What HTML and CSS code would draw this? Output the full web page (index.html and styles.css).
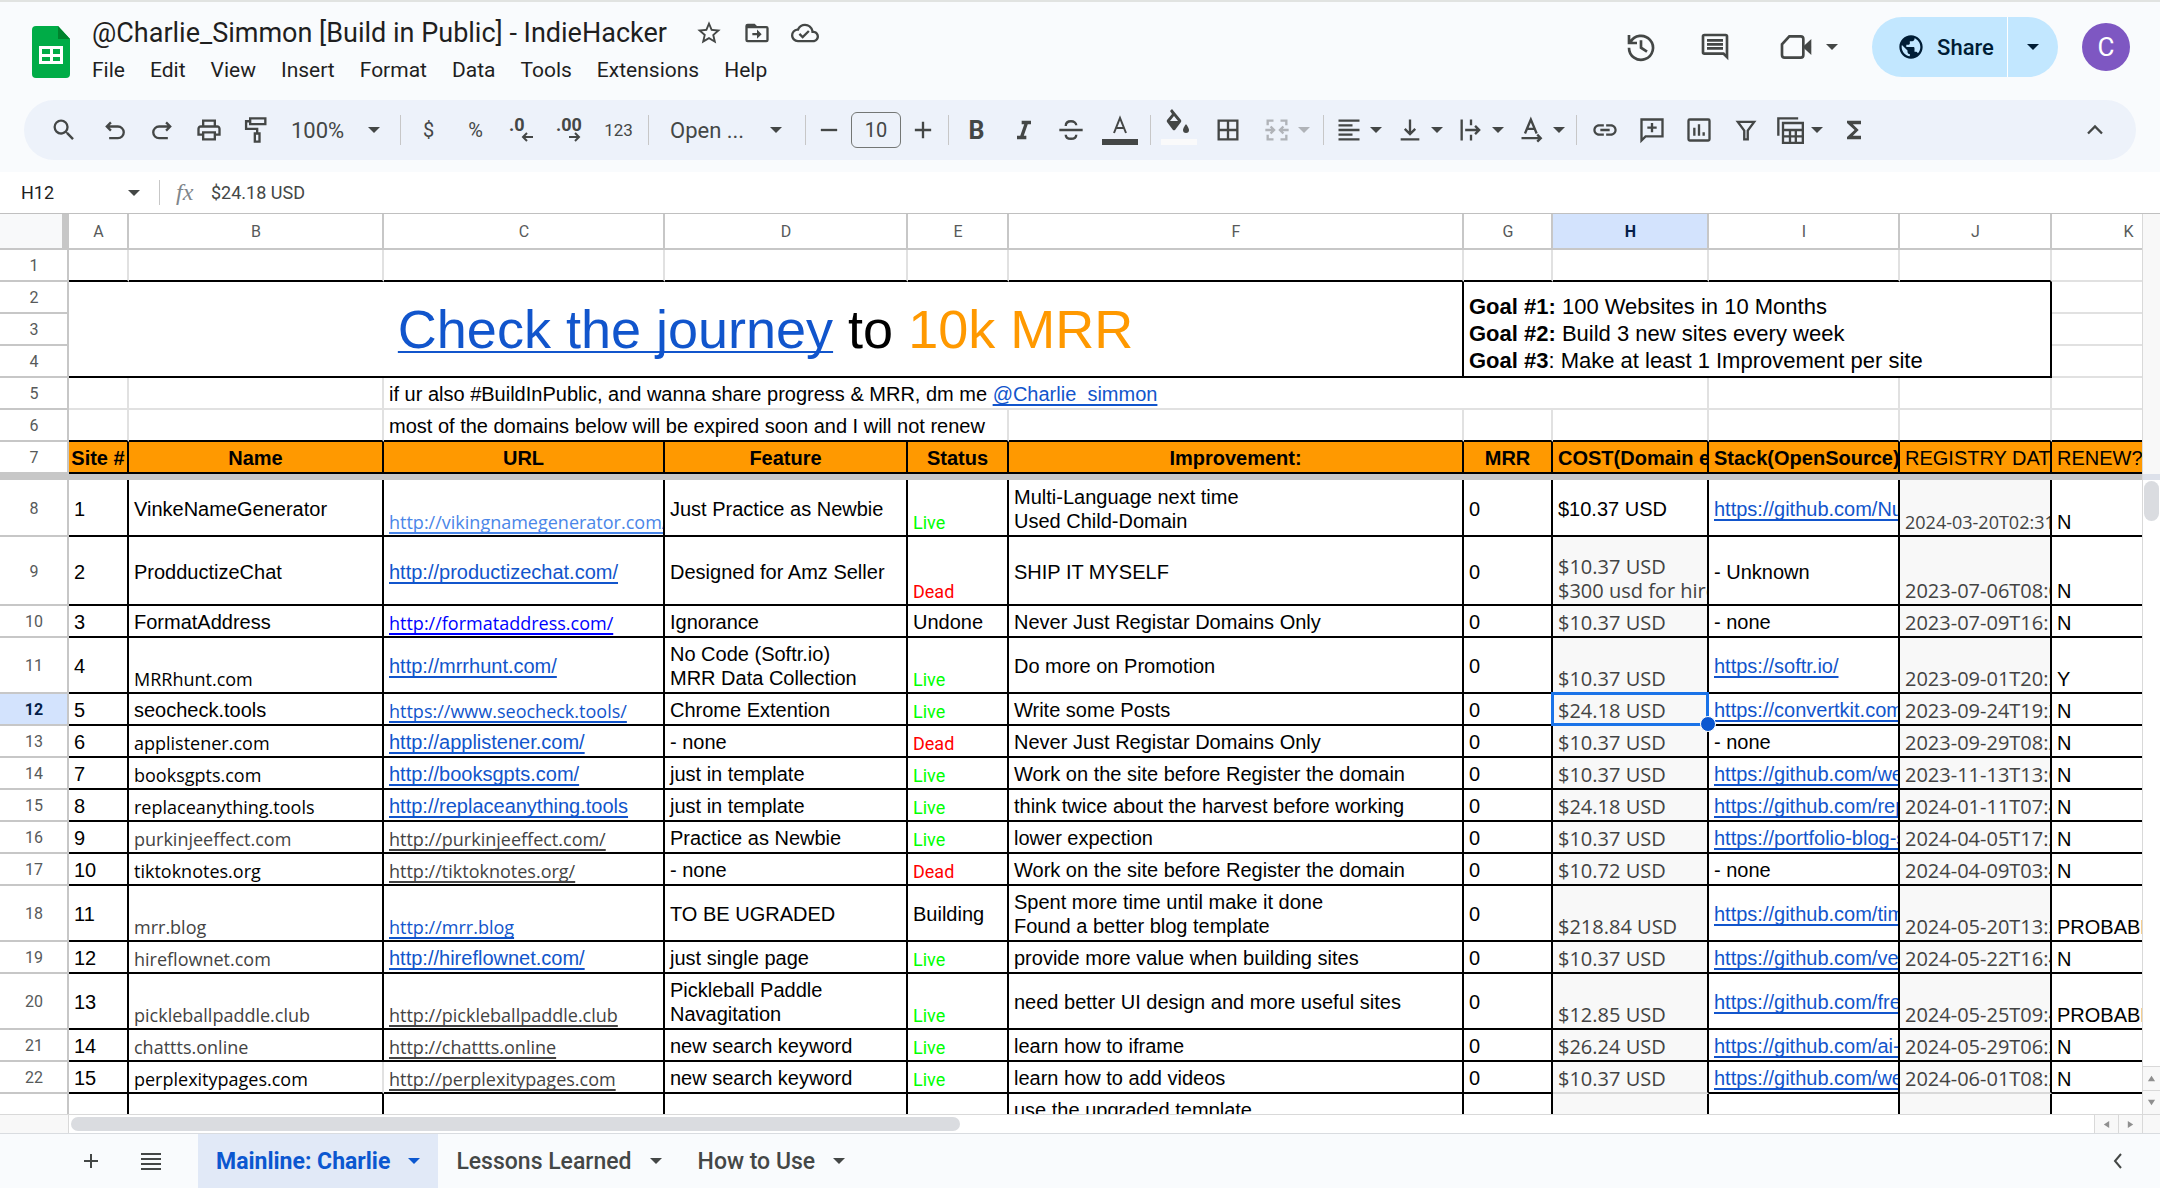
FILE: index.html
```html
<!DOCTYPE html>
<html lang="en">
<head>
  <meta charset="UTF-8">
  <meta name="viewport" content="width=device-width, initial-scale=1.0">
  <title>@Charlie_Simmon [Build in Public] - IndieHacker</title>
  <link rel="stylesheet" href="styles.css">
</head>
<body>

  <header class="top">
    <svg class="logo" viewBox="0 0 38 52"><path d="M4 0h22l12 13v35a4 4 0 0 1-4 4H4a4 4 0 0 1-4-4V4a4 4 0 0 1 4-4z" fill="#00ac47"/><path d="M26 0l12 13H26z" fill="#00832d"/><path d="M7 20h24v18H7zM10 23v5h8v-5zM21 23v5h7v-5zM10 31v4h8v-4zM21 31v4h7v-4z" fill="#fff" fill-rule="evenodd"/></svg>
    <div class="doc">
      <div class="doc-title">
        <h1>@Charlie_Simmon [Build in Public] - IndieHacker</h1>
        <button aria-label="Star"><svg viewBox="0 0 24 24"><path d="M22 9.24l-7.19-.62L12 2 9.19 8.63 2 9.24l5.46 4.73L5.82 21 12 17.27 18.18 21l-1.63-7.03L22 9.24zM12 15.4l-3.76 2.27 1-4.28-3.32-2.88 4.38-.38L12 6.1l1.71 4.04 4.38.38-3.32 2.88 1 4.28L12 15.4z"/></svg></button>
        <button aria-label="Move"><svg viewBox="0 0 24 24"><path d="M20 6h-8l-2-2H4a2 2 0 0 0-2 2v12a2 2 0 0 0 2 2h16a2 2 0 0 0 2-2V8a2 2 0 0 0-2-2zm0 12H4V8h16v10zm-8-1l4-4-4-4v3H8v2h4z"/></svg></button>
        <button aria-label="Saved to Drive"><svg viewBox="0 0 24 24"><path d="M19.35 10.04A7.49 7.49 0 0 0 12 4C9.11 4 6.6 5.64 5.35 8.04A5.994 5.994 0 0 0 0 14c0 3.31 2.69 6 6 6h13c2.76 0 5-2.24 5-5 0-2.64-2.05-4.78-4.65-4.96zM19 18H6c-2.21 0-4-1.79-4-4s1.79-4 4-4h.71C7.37 7.69 9.48 6 12 6c3.04 0 5.5 2.46 5.5 5.5v.5H19c1.66 0 3 1.34 3 3s-1.34 3-3 3zm-9-3.82l-2.09-2.09L6.5 13.5 10 17l6.01-6.01-1.41-1.41z"/></svg></button>
      </div>
      <nav class="menu">
        <button>File</button>
        <button>Edit</button>
        <button>View</button>
        <button>Insert</button>
        <button>Format</button>
        <button>Data</button>
        <button>Tools</button>
        <button>Extensions</button>
        <button>Help</button>
      </nav>
    </div>
    <div class="actions">
      <button class="big" aria-label="History"><svg viewBox="0 0 24 24"><path d="M3 3v6h6M4 8.500A9 9 0 1 1 3 12.500M12 7v5.500l4.500 3" class="line"/></svg></button>
      <button class="big" aria-label="Comments"><svg viewBox="0 0 24 24"><path d="M21.990 4a2 2 0 0 0-2-2H4a2 2 0 0 0-2 2v12a2 2 0 0 0 2 2h14l4 4zM20 4v13.170L18.830 16H4V4zM6 12h12v2H6zM6 9h12v2H6zM6 6h12v2H6z" fill-rule="evenodd"/></svg></button>
      <button class="big meet" aria-label="Meet"><svg viewBox="0 0 24 24"><path d="M7 4h8.500a2 2 0 0 1 2 2v12a2 2 0 0 1-2 2H3.500a2 2 0 0 1-2-2V10z" class="line"/><path d="M18 11l5.500-5v12L18 13z"/></svg><i class="caret"></i></button>
      <div class="share">
        <button class="share-main"><svg viewBox="0 0 24 24"><path d="M12 2C6.480 2 2 6.480 2 12s4.480 10 10 10 10-4.480 10-10S17.520 2 12 2zm-1 17.930c-3.950-.49-7-3.850-7-7.930 0-.62.080-1.210.21-1.790L9 15v1c0 1.100.9 2 2 2v1.930zm6.900-2.540c-.26-.81-1-1.390-1.900-1.390h-1v-3c0-.55-.45-1-1-1H8v-2h2c.55 0 1-.45 1-1V7h2c1.100 0 2-.9 2-2v-.41c2.930 1.190 5 4.060 5 7.410 0 2.080-.8 3.970-2.100 5.390z"/></svg>Share</button>
        <button class="share-more" aria-label="Share options"><i class="caret"></i></button>
      </div>
      <button class="avatar">C</button>
    </div>
  </header>

  <div class="toolbar">
    <button class="search" aria-label="Search menus"><svg viewBox="0 0 24 24"><path d="M15.500 14h-.79l-.28-.27A6.471 6.471 0 0 0 16 9.500 6.500 6.500 0 1 0 9.500 16c1.610 0 3.090-.59 4.230-1.570l.27.28v.79l5 4.990L20.490 19l-4.990-5zm-6 0C7.010 14 5 11.990 5 9.500S7.010 5 9.500 5 14 7.010 14 9.500 11.990 14 9.500 14z"/></svg></button>
    <button aria-label="Undo"><svg viewBox="0 0 24 24"><path d="M8.500 5.500L5 9l3.500 3.500M5 9h9.500a4.500 4.500 0 0 1 0 10H7" class="line"/></svg></button>
    <button aria-label="Redo"><svg viewBox="0 0 24 24"><path d="M15.500 5.500L19 9l-3.500 3.500M19 9H9.500a4.500 4.500 0 0 0 0 10H17" class="line"/></svg></button>
    <button aria-label="Print"><svg viewBox="0 0 24 24"><path d="M19 8h-1V3H6v5H5c-1.660 0-3 1.340-3 3v6h4v4h12v-4h4v-6c0-1.660-1.340-3-3-3zM8 5h8v3H8V5zm8 14H8v-4h8v4zm2-4v-2H6v2H4v-4c0-.55.45-1 1-1h14c.55 0 1 .45 1 1v4h-2z"/></svg></button>
    <button aria-label="Paint format"><svg viewBox="0 0 24 24"><path d="M7 2h13v5H7zM7 4.500H3.500V11H13v4" class="line"/><path d="M11 15h4v7h-4z" class="line"/></svg></button>
    <label class="pick zoom"><select aria-label="Zoom"><option>100%</option></select><i class="caret"></i></label>
    <span class="sep"></span>
    <button class="sym">$</button>
    <button class="sym">%</button>
    <button aria-label="Decrease decimal places"><svg class="dec" viewBox="0 0 36 36"><text x="4" y="19">.0</text><path d="M28 25H18M22 21l-4 4 4 4" class="line"/></svg></button>
    <button aria-label="Increase decimal places"><svg class="dec" viewBox="0 0 36 36"><text x="4" y="19">.00</text><path d="M17 25h10M23 21l4 4-4 4" class="line"/></svg></button>
    <button class="num">123</button>
    <span class="sep"></span>
    <label class="pick font"><select aria-label="Font"><option>Open ...</option></select><i class="caret"></i></label>
    <span class="sep"></span>
    <div class="size">
      <button aria-label="Decrease font size"><svg viewBox="0 0 24 24"><path d="M5 12h14" class="line"/></svg></button>
      <input type="text" value="10" aria-label="Font size">
      <button aria-label="Increase font size"><svg viewBox="0 0 24 24"><path d="M5 12h14M12 5v14" class="line"/></svg></button>
    </div>
    <span class="sep"></span>
    <button class="bold">B</button>
    <button aria-label="Italic"><svg viewBox="0 0 24 24"><path d="M10 4v3h2.210l-3.420 10H6v3h8v-3h-2.210l3.420-10H18V4z"/></svg></button>
    <button aria-label="Strikethrough"><svg viewBox="0 0 24 24"><path d="M2 12h20M7.500 8.500c0-3 2-4 4.500-4s4.500 1.300 4.500 3.500M7.500 16c0 2.500 2 3.500 4.500 3.500s4.500-1 4.500-3.500" class="line"/></svg></button>
    <button class="wide" aria-label="Text color"><svg class="tall" viewBox="0 0 36 44"><path d="M12 25l6-15 6 15M14 20h8" class="line"/><path d="M0 31h36v6H0z"/></svg></button>
    <span class="sep"></span>
    <button aria-label="Fill color"><svg class="tall" viewBox="0 0 36 44"><path d="M9 3l2-2 9 11a2 2 0 0 1 0 2l-6 8a2 2 0 0 1-2 0l-6-8a2 2 0 0 1 0-2l5-6zM9 13h8l-4-5z" fill-rule="evenodd"/><path d="M25 16s3 4 3 6a3 3 0 0 1-6 0c0-2 3-6 3-6z"/><path d="M0 31h36v6H0z" fill="#fafafa"/></svg></button>
    <button class="wide" aria-label="Borders"><svg viewBox="0 0 24 24"><path d="M3 3v18h18V3H3zm8 16H5v-6h6v6zm0-8H5V5h6v6zm8 8h-6v-6h6v6zm0-8h-6V5h6v6z"/></svg></button>
    <button class="drop off" aria-label="Merge cells" disabled><svg viewBox="0 0 24 24"><path d="M9 4H4v4M4 16v4h5M15 4h5v4M20 16v4h-5M2 12h7M6.500 9l3 3-3 3M22 12h-7M17.500 9l-3 3 3 3" class="line"/></svg><i class="caret"></i></button>
    <span class="sep"></span>
    <button class="drop" aria-label="Horizontal align"><svg viewBox="0 0 24 24"><path d="M3 4h18M3 8h12M3 12h18M3 16h12M3 20h18" class="line"/></svg><i class="caret"></i></button>
    <button class="drop" aria-label="Vertical align"><svg viewBox="0 0 24 24"><path d="M4 20h16M12 3v12M7.500 11l4.500 4.500 4.500-4.500" class="line"/></svg><i class="caret"></i></button>
    <button class="drop" aria-label="Text wrapping"><svg viewBox="0 0 24 24"><path d="M4 3v18M12 3v5M12 16v5M7 12h12M15.500 8.500L19 12l-3.500 3.500" class="line"/></svg><i class="caret"></i></button>
    <button class="drop" aria-label="Text rotation"><svg viewBox="0 0 24 24"><path d="M6 15l5-12 5 12M8 11h6M3 19h16M16.500 16l3 3-3 3" class="line"/></svg><i class="caret"></i></button>
    <span class="sep"></span>
    <button aria-label="Insert link"><svg viewBox="0 0 24 24"><path d="M3.900 12c0-1.710 1.390-3.100 3.100-3.100h4V7H7c-2.760 0-5 2.240-5 5s2.240 5 5 5h4v-1.900H7c-1.710 0-3.100-1.390-3.100-3.100zM8 13h8v-2H8v2zm9-6h-4v1.900h4c1.710 0 3.100 1.390 3.100 3.100s-1.390 3.100-3.100 3.100h-4V17h4c2.760 0 5-2.240 5-5s-2.240-5-5-5z"/></svg></button>
    <button aria-label="Insert comment"><svg viewBox="0 0 24 24"><path d="M3 21V3h18v14.500H6.500zM12 6v8M8 10h8" class="line"/></svg></button>
    <button aria-label="Insert chart"><svg viewBox="0 0 24 24"><path d="M4 3h16a1 1 0 0 1 1 1v16a1 1 0 0 1-1 1H4a1 1 0 0 1-1-1V4a1 1 0 0 1 1-1zM8 10v7M12 7v10M16 14v3" class="line"/></svg></button>
    <button aria-label="Create a filter"><svg viewBox="0 0 24 24"><path d="M5 5h14l-5.500 7.500V20h-3v-7.500z" class="line"/></svg></button>
    <button class="drop" aria-label="Filter views"><svg viewBox="0 0 24 24"><path d="M2 17V2h17" class="line"/><path d="M6 6h17v17H6zM6 12h17M6 17.500h17M12 12v11M17 12v11" class="line"/></svg><i class="caret"></i></button>
    <button aria-label="Functions"><svg viewBox="0 0 24 24"><path d="M18 4H6v2l6.500 6L6 18v2h12v-3h-7l5-5-5-5h7z"/></svg></button>
    <button class="hide" aria-label="Hide the menus"><svg viewBox="0 0 24 24"><path d="M6 15l6-6 6 6" class="line"/></svg></button>
  </div>

  <div class="formula">
    <input class="namebox" type="text" value="H12" aria-label="Name box">
    <i class="caret"></i>
    <span class="rule"></span>
    <span class="fx">fx</span>
    <input class="fxinput" type="text" value="$24.18 USD" aria-label="Formula">
  </div>

  <main class="sheet">
    <div class="viewport">
      <table>
        <colgroup>
          <col class="c-n"><col class="c-a"><col class="c-b"><col class="c-c"><col class="c-d"><col class="c-e"><col class="c-f"><col class="c-g"><col class="c-h"><col class="c-i"><col class="c-j"><col class="c-k">
        </colgroup>
        <thead>
          <tr class="letters"><th class="corner"></th><th>A</th><th>B</th><th>C</th><th>D</th><th>E</th><th>F</th><th>G</th><th class="on">H</th><th>I</th><th>J</th><th>K</th></tr>
        </thead>
        <tbody>
          <tr class="plain edge"><th>1</th><td></td><td></td><td></td><td></td><td></td><td></td><td></td><td></td><td></td><td></td><td class="free"></td></tr>
          <tr><th>2</th><td class="banner" colspan="6" rowspan="3"><a href="#">Check the journey</a> to <span>10k MRR</span></td><td class="goals" colspan="4" rowspan="3"><b>Goal #1:</b> 100 Websites in 10 Months<br><b>Goal #2:</b> Build 3 new sites every week<br><b>Goal #3</b>: Make at least 1 Improvement per site</td><td class="free"></td></tr>
          <tr><th>3</th><td class="free"></td></tr>
          <tr><th>4</th><td class="free"></td></tr>
          <tr class="plain"><th>5</th><td></td><td></td><td colspan="6">if ur also #BuildInPublic, and wanna share progress &amp; MRR, dm me <a href="#">@Charlie_simmon</a></td><td></td><td></td><td></td></tr>
          <tr class="plain edge"><th>6</th><td></td><td></td><td colspan="3">most of the domains below will be expired soon and I will not renew</td><td></td><td></td><td></td><td></td><td></td><td></td></tr>
          <tr class="heading"><th>7</th><td>Site #</td><td>Name</td><td>URL</td><td>Feature</td><td>Status</td><td>Improvement:</td><td>MRR</td><td class="left">COST(Domain e</td><td class="left">Stack(OpenSource)</td><td class="left thin">REGISTRY DAT</td><td class="left thin">RENEW?</td></tr>
          <tr class="freeze"><td colspan="12"></td></tr>

          <tr class="r57"><th>8</th><td>1</td><td>VinkeNameGenerator</td><td class="os low"><a class="sky" href="#">http://vikingnamegenerator.com/</a></td><td>Just Practice as Newbie</td><td class="live">Live</td><td>Multi-Language next time<br>Used Child-Domain</td><td>0</td><td>$10.37 USD</td><td><a href="#">https://github.com/Nu</a></td><td class="date os">2024-03-20T02:31</td><td class="low">N</td></tr>
          <tr class="r69"><th>9</th><td>2</td><td>ProdductizeChat</td><td><a href="#">http://productizechat.com/</a></td><td>Designed for Amz Seller</td><td class="dead">Dead</td><td>SHIP IT MYSELF</td><td>0</td><td class="cost">$10.37 USD<br>$300 usd for hire</td><td>- Unknown</td><td class="date">2023-07-06T08:0</td><td class="low">N</td></tr>
          <tr><th>10</th><td>3</td><td>FormatAddress</td><td class="os low"><a class="pure" href="#">http://formataddress.com/</a></td><td>Ignorance</td><td>Undone</td><td>Never Just Registar Domains Only</td><td>0</td><td class="cost">$10.37 USD</td><td>- none</td><td class="date">2023-07-09T16:1</td><td class="low">N</td></tr>
          <tr class="r56"><th>11</th><td>4</td><td class="os low">MRRhunt.com</td><td><a href="#">http://mrrhunt.com/</a></td><td>No Code (Softr.io)<br>MRR Data Collection</td><td class="live">Live</td><td>Do more on Promotion</td><td>0</td><td class="cost">$10.37 USD</td><td><a href="#">https://softr.io/</a></td><td class="date">2023-09-01T20:5</td><td class="low">Y</td></tr>
          <tr><th class="on">12</th><td>5</td><td>seocheck.tools</td><td class="os low"><a href="#">https://www.seocheck.tools/</a></td><td>Chrome Extention</td><td class="live">Live</td><td>Write some Posts</td><td>0</td><td class="cost active">$24.18 USD</td><td><a href="#">https://convertkit.com</a></td><td class="date">2023-09-24T19:3</td><td class="low">N</td></tr>
          <tr><th>13</th><td>6</td><td class="os low">applistener.com</td><td><a href="#">http://applistener.com/</a></td><td>- none</td><td class="dead">Dead</td><td>Never Just Registar Domains Only</td><td>0</td><td class="cost">$10.37 USD</td><td>- none</td><td class="date">2023-09-29T08:2</td><td class="low">N</td></tr>
          <tr><th>14</th><td>7</td><td class="os low">booksgpts.com</td><td><a href="#">http://booksgpts.com/</a></td><td>just in template</td><td class="live">Live</td><td>Work on the site before Register the domain</td><td>0</td><td class="cost">$10.37 USD</td><td><a href="#">https://github.com/we</a></td><td class="date">2023-11-13T13:0</td><td class="low">N</td></tr>
          <tr><th>15</th><td>8</td><td class="os low">replaceanything.tools</td><td><a href="#">http://replaceanything.tools</a></td><td>just in template</td><td class="live">Live</td><td>think twice about the harvest before working</td><td>0</td><td class="cost">$24.18 USD</td><td><a href="#">https://github.com/rep</a></td><td class="date">2024-01-11T07:4</td><td class="low">N</td></tr>
          <tr><th>16</th><td>9</td><td class="os low gray">purkinjeeffect.com</td><td class="os low"><a class="gray" href="#">http://purkinjeeffect.com/</a></td><td>Practice as Newbie</td><td class="live">Live</td><td>lower expection</td><td>0</td><td class="cost">$10.37 USD</td><td><a href="#">https://portfolio-blog-s</a></td><td class="date">2024-04-05T17:2</td><td class="low">N</td></tr>
          <tr><th>17</th><td>10</td><td class="os low">tiktoknotes.org</td><td class="os low"><a class="gray" href="#">http://tiktoknotes.org/</a></td><td>- none</td><td class="dead">Dead</td><td>Work on the site before Register the domain</td><td>0</td><td class="cost">$10.72 USD</td><td>- none</td><td class="date">2024-04-09T03:4</td><td class="low">N</td></tr>
          <tr class="r56"><th>18</th><td>11</td><td class="os low gray">mrr.blog</td><td class="os low"><a href="#">http://mrr.blog</a></td><td>TO BE UGRADED</td><td>Building</td><td>Spent more time until make it done<br>Found a better blog template</td><td>0</td><td class="cost">$218.84 USD</td><td><a href="#">https://github.com/tim</a></td><td class="date">2024-05-20T13:3</td><td class="low">PROBABLY</td></tr>
          <tr><th>19</th><td>12</td><td class="os low gray">hireflownet.com</td><td><a href="#">http://hireflownet.com/</a></td><td>just single page</td><td class="live">Live</td><td>provide more value when building sites</td><td>0</td><td class="cost">$10.37 USD</td><td><a href="#">https://github.com/ver</a></td><td class="date">2024-05-22T16:4</td><td class="low">N</td></tr>
          <tr class="r56"><th>20</th><td>13</td><td class="os low gray">pickleballpaddle.club</td><td class="os low"><a class="gray" href="#">http://pickleballpaddle.club</a></td><td>Pickleball Paddle<br>Navagitation</td><td class="live">Live</td><td>need better UI design and more useful sites</td><td>0</td><td class="cost">$12.85 USD</td><td><a href="#">https://github.com/fre</a></td><td class="date">2024-05-25T09:4</td><td class="low">PROBABLY</td></tr>
          <tr><th>21</th><td>14</td><td class="os low gray">chattts.online</td><td class="os low"><a class="gray" href="#">http://chattts.online</a></td><td>new search keyword</td><td class="live">Live</td><td>learn how to iframe</td><td>0</td><td class="cost">$26.24 USD</td><td><a href="#">https://github.com/ai-a</a></td><td class="date">2024-05-29T06:3</td><td class="low">N</td></tr>
          <tr class="last"><th>22</th><td>15</td><td class="os low softright">perplexitypages.com</td><td class="os low"><a class="gray" href="#">http://perplexitypages.com</a></td><td>new search keyword</td><td class="live">Live</td><td>learn how to add videos</td><td>0</td><td class="cost">$10.37 USD</td><td><a href="#">https://github.com/we</a></td><td class="date">2024-06-01T08:2</td><td class="low">N</td></tr>
          <tr class="r56"><th></th><td></td><td></td><td></td><td></td><td></td><td>use the upgraded template<br>&nbsp;</td><td></td><td class="cost"></td><td></td><td class="date"></td><td></td></tr>
        </tbody>
      </table>
    </div>
    <div class="vbar">
      <div class="vbar-head"></div>
      <div class="vthumb"></div>
      <button class="arrow" aria-label="Scroll up"><svg viewBox="0 0 10 10"><path d="M1 8l4-6 4 6z"/></svg></button>
      <button class="arrow" aria-label="Scroll down"><svg viewBox="0 0 10 10"><path d="M1 2l4 6 4-6z"/></svg></button>
    </div>
  </main>

  <div class="hbar">
    <div class="hbar-left"></div>
    <div class="htrack"><div class="hthumb"></div></div>
    <button class="arrow" aria-label="Scroll left"><svg viewBox="0 0 10 10"><path d="M8 1L2 5l6 4z"/></svg></button>
    <button class="arrow" aria-label="Scroll right"><svg viewBox="0 0 10 10"><path d="M2 1l6 4-6 4z"/></svg></button>
    <div class="hbar-end"></div>
  </div>

  <footer class="tabs">
    <button class="tool" aria-label="Add sheet"><svg viewBox="0 0 24 24"><path d="M5 12h14M12 5v14" class="line"/></svg></button>
    <button class="tool" aria-label="All sheets"><svg viewBox="0 0 24 24"><path d="M2 4h20v2H2zM2 9h20v2H2zM2 14h20v2H2zM2 19h20v2H2z"/></svg></button>
    <button class="tab current">Mainline: Charlie<i class="caret"></i></button>
    <button class="tab">Lessons Learned<i class="caret"></i></button>
    <button class="tab">How to Use<i class="caret"></i></button>
    <button class="tool side" aria-label="Show side panel"><svg viewBox="0 0 24 24"><path d="M15 5l-6 7 6 7" class="line"/></svg></button>
  </footer>

</body>
</html>
```

FILE: styles.css
```css
* {
  box-sizing: border-box;
}

body {
  margin: 0;
  height: 100vh;
  display: flex;
  flex-direction: column;
  overflow: hidden;
  background: #f9fbfd;
  border-top: 2px solid #e1e3e1;
  font-family: Roboto, "Liberation Sans", sans-serif;
  color: #1f1f1f;
}

button, select, input {
  border: 0;
  padding: 0;
  margin: 0;
  background: none;
  font: inherit;
  color: inherit;
}

button {
  display: flex;
  align-items: center;
  justify-content: center;
  flex: none;
}

svg {
  width: 28px;
  height: 28px;
  flex: none;
  fill: currentColor;
}

.line {
  fill: none;
  stroke: currentColor;
  stroke-width: 2;
}

.caret {
  width: 0;
  height: 0;
  flex: none;
  border: 6px solid transparent;
  border-top-color: currentColor;
  border-bottom: 0;
}

/* header */
.top {
  display: flex;
  flex: none;
  height: 98px;
  padding: 0 30px 0 32px;
  color: #444746;
}

.logo {
  width: 38px;
  height: 52px;
  margin-top: 24px;
}

.doc {
  padding: 11px 0 0 22px;
}

.doc-title {
  display: flex;
  align-items: center;
  gap: 20px;
  height: 40px;
}

.doc-title h1 {
  margin: 0 8px 0 0;
  font-size: 27px;
  font-weight: 400;
  line-height: 40px;
  white-space: nowrap;
  color: #1f1f1f;
}

.menu {
  display: flex;
  gap: 25px;
  font-size: 21px;
  line-height: 34px;
  color: #1f1f1f;
}

.actions {
  display: flex;
  align-items: center;
  height: 90px;
  margin-left: auto;
}

.big {
  width: 74px;
}

.big svg {
  width: 32px;
  height: 32px;
}

.meet {
  width: 108px;
  gap: 14px;
  margin-right: 12px;
  padding-left: 5px;
}

.share {
  display: flex;
  height: 60px;
  margin-right: 24px;
  border-radius: 30px;
  overflow: hidden;
  background: #c2e7ff;
  color: #001d35;
  font-size: 22px;
  font-weight: 500;
}

.share-main {
  width: 136px;
  gap: 12px;
  padding-left: 12px;
  border-right: 1px solid #fff;
}

.share-more {
  width: 50px;
}

.avatar {
  width: 48px;
  height: 48px;
  border-radius: 50%;
  background: #7e57c2;
  color: #fff;
  font-size: 26px;
}

/* toolbar */
.toolbar {
  display: flex;
  flex: none;
  align-items: center;
  height: 60px;
  margin: 0 24px 12px;
  padding: 0 18px 0 13px;
  border-radius: 30px;
  background: #edf2fa;
  color: #444746;
  font-size: 22px;
}

.toolbar button {
  width: 47px;
  height: 44px;
}

.toolbar .search {
  width: 54px;
}

.toolbar .wide {
  width: 52px;
}

.toolbar .sym {
  font-size: 20px;
}

.toolbar .num {
  width: 51px;
  font-size: 17px;
}

.toolbar .bold {
  font-size: 25px;
  font-weight: 700;
}

.toolbar .drop {
  width: 61px;
  gap: 7px;
}

.toolbar .off {
  width: 65px;
  color: #b0b3b8;
}

.toolbar .hide {
  margin-left: auto;
}

.toolbar svg.dec {
  width: 36px;
  height: 36px;
  font-size: 18px;
  font-weight: 700;
}

.toolbar svg.tall {
  width: 36px;
  height: 44px;
}

.sep {
  width: 1px;
  height: 30px;
  margin: 0 4px;
  flex: none;
  background: #c7c7c7;
}

.pick {
  display: flex;
  flex: none;
  align-items: center;
  justify-content: space-between;
}

.pick select {
  appearance: none;
  flex: 1;
}

.zoom {
  width: 117px;
  padding: 0 16px 0 12px;
}

.font {
  width: 148px;
  padding: 0 19px 0 17px;
}

.size {
  display: flex;
  align-items: center;
  gap: 3px;
  padding-right: 2px;
}

.size button {
  width: 38px;
}

.size input {
  width: 50px;
  height: 36px;
  border: 1px solid #747775;
  border-radius: 6px;
  text-align: center;
  font-size: 20px;
}

/* formula bar */
.formula {
  display: flex;
  flex: none;
  align-items: center;
  height: 41px;
  padding-left: 21px;
  background: #fff;
  color: #444746;
  font-size: 18px;
}

.namebox {
  width: 107px;
  color: #1f1f1f;
}

.rule {
  width: 1px;
  height: 25px;
  margin: 0 16px 0 19px;
  background: #c7c7c7;
}

.fx {
  width: 35px;
  font-family: "Liberation Serif", serif;
  font-size: 24px;
  font-style: italic;
  color: #80868b;
}

.fxinput {
  flex: 1;
}

/* grid */
.sheet {
  display: flex;
  flex: 1;
  min-height: 0;
  border-top: 1px solid #c0c0c0;
  background: #fff;
}

.viewport {
  flex: 1;
  min-width: 0;
  overflow: hidden;
}

table {
  width: 2206px;
  table-layout: fixed;
  border-collapse: separate;
  border-spacing: 0;
  font-family: "Liberation Sans", Arial, sans-serif;
  font-size: 20px;
  line-height: 24px;
  color: #000;
}

.c-n { width: 69px; }
.c-a { width: 60px; }
.c-b { width: 255px; }
.c-c { width: 281px; }
.c-d { width: 243px; }
.c-e { width: 101px; }
.c-f { width: 455px; }
.c-g { width: 89px; }
.c-h { width: 156px; }
.c-i { width: 191px; }
.c-j { width: 152px; }
.c-k { width: 154px; }

tr {
  height: 32px;
}

.r56 { height: 56px; }
.r57 { height: 57px; }
.r69 { height: 69px; }

td, th {
  border: solid #000;
  border-width: 0 2px 2px 0;
  padding: 2px 4px 0 5px;
  white-space: nowrap;
  overflow: hidden;
}

th {
  border-color: #c7c7c7;
  font-family: Roboto, sans-serif;
  font-size: 16px;
  font-weight: 400;
  color: #575a5a;
}

th.on {
  background: #d3e3fd;
  color: #041e49;
  font-weight: 700;
}

.letters {
  height: 36px;
}

.corner {
  background: #f8f9fa;
  border-right-width: 7px;
}

.plain td, .free {
  border-color: #e1e1e1;
}

.edge td:not(.free) {
  border-bottom-color: #000;
}

td a {
  color: #1155cc;
  text-decoration: underline 2px;
  text-underline-offset: 3px;
  text-decoration-skip-ink: none;
}

.banner {
  padding: 0;
  font-size: 54px;
  line-height: 64px;
  text-align: center;
}

.banner span {
  color: #ff9900;
}

.goals {
  padding-bottom: 2px;
  font-size: 22px;
  line-height: 27px;
  vertical-align: bottom;
}

.heading td {
  padding: 2px 2px 0;
  background: #ff9900;
  font-weight: 700;
  text-align: center;
}

.heading .left {
  padding-left: 5px;
  text-align: left;
}

.heading .thin {
  font-weight: 400;
}

.freeze, .freeze td {
  height: 6px;
  padding: 0;
  border: 0;
  background: #c7c7c7;
  line-height: 0;
}

.low, .cost, .date {
  padding-bottom: 1px;
  vertical-align: bottom;
}

.live, .dead {
  vertical-align: bottom;
}

.cost, .date {
  background: #f8f8f8;
  font-family: "Open Sans", sans-serif;
  color: #434343;
}

.os {
  font-family: "Open Sans", sans-serif;
  font-size: 18px;
}

.live, .dead {
  font-family: Roboto, sans-serif;
  font-size: 18px;
}

.live { color: #00ff00; }
.dead { color: #ff0000; }
.sky { color: #4a86e8; }
.pure { color: #0000ff; }
.gray { color: #434343; }

.last .cost, .last .date {
  border-bottom-color: #d9d9d9;
}

.last .softright {
  border-right-color: #e1e1e1;
}

/* selected cell with its drag handle */
.active {
  position: relative;
  overflow: visible;
}

.active::before {
  content: "";
  position: absolute;
  inset: -2px;
  border: 3px solid #1a73e8;
}

.active::after {
  content: "";
  position: absolute;
  right: -9px;
  bottom: -8px;
  width: 14px;
  height: 14px;
  border: 1px solid #fff;
  border-radius: 50%;
  background: #0b57d0;
}

/* scroll bars */
.vbar {
  display: flex;
  flex-direction: column;
  width: 18px;
  border-left: 1px solid #d9d9d9;
}

.vbar-head {
  height: 266px;
  border-bottom: 6px solid #dde1ea;
  background: #f8f8f8;
}

.vthumb {
  height: 40px;
  margin: 1px 1px auto;
  border-radius: 8px;
  background: #dadce0;
}

.arrow {
  background: #f8f8f8;
  border: solid #d9d9d9;
  color: #8f8f8f;
}

.arrow svg {
  width: 9px;
  height: 9px;
}

.vbar .arrow {
  height: 24px;
  border-width: 1px 0 0;
}

.hbar {
  display: flex;
  flex: none;
  height: 19px;
  border-top: 1px solid #d9d9d9;
  background: #fff;
}

.hbar-left {
  width: 69px;
  border-right: 1px solid #d9d9d9;
  background: #f8f8f8;
}

.htrack {
  flex: 1;
  padding: 2px;
}

.hthumb {
  width: 44%;
  height: 14px;
  border-radius: 7px;
  background: #dadce0;
}

.hbar .arrow {
  width: 24px;
  border-width: 0 0 0 1px;
}

.hbar-end {
  width: 18px;
  background: #f8f8f8;
  border-left: 1px solid #d9d9d9;
}

/* sheet tabs */
.tabs {
  display: flex;
  flex: none;
  height: 55px;
  padding: 0 12px 0 61px;
  border-top: 1px solid #d9dce0;
  font-size: 23px;
  font-weight: 500;
  color: #444746;
}

.tool {
  width: 60px;
}

.tool svg {
  width: 24px;
  height: 24px;
}

.tab {
  gap: 18px;
  padding: 0 18px;
}

.current {
  margin-left: 17px;
  background: #e1e9f7;
  color: #0b57d0;
  font-weight: 700;
}

.side {
  margin-left: auto;
}
```
